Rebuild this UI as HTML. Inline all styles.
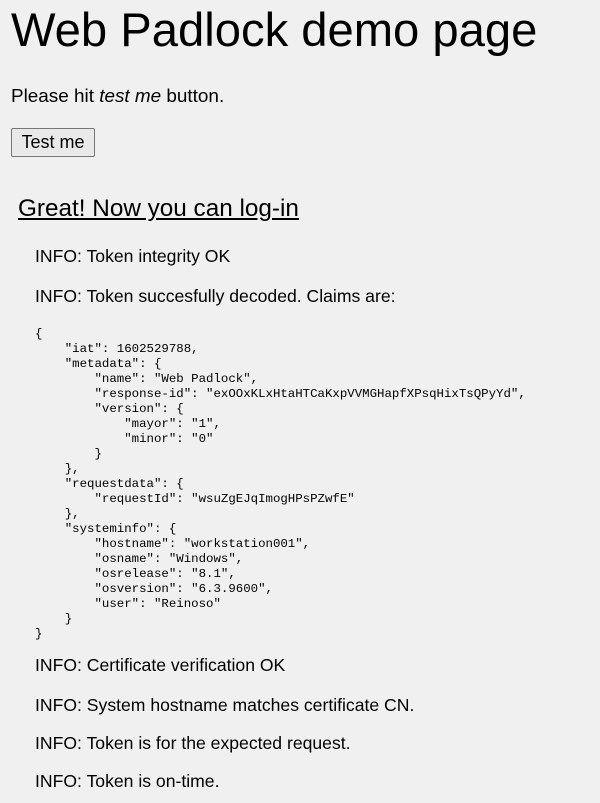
<!DOCTYPE html>
<html><head><meta charset="utf-8"><style>
body{margin:0;background:#f0f0f0;font-family:"Liberation Sans",Arial,sans-serif;color:#000;width:600px;height:803px;overflow:hidden;position:relative}
.a{position:absolute;white-space:pre;line-height:1}
h1{position:absolute;left:11px;top:7px;margin:0;font-weight:normal;font-size:47.2px;line-height:1}
.p{font-size:18.9px;left:11px}
.btn{position:absolute;left:11px;top:128px;width:82px;height:27px;border:1px solid #777;border-radius:2px;background:#e9e9e9;font-size:18px;text-align:center;line-height:27px;box-sizing:content-box}
.g{left:18px;top:197px;font-size:24.3px;text-decoration:underline}
.i{left:35px;font-size:17.6px}
pre{position:absolute;left:35px;top:327px;margin:0;font-family:"Liberation Mono",monospace;font-size:12.4px;line-height:15px}
</style></head><body>
<h1>Web Padlock demo page</h1>
<div class="a p" style="top:88px">Please hit <i>test me</i> button.</div>
<div class="btn">Test me</div>
<div class="a g">Great! Now you can log-in</div>
<div class="a i" style="top:248px">INFO: Token integrity OK</div>
<div class="a i" style="top:288px">INFO: Token succesfully decoded. Claims are:</div>
<pre>{
    "iat": 1602529788,
    "metadata": {
        "name": "Web Padlock",
        "response-id": "exOOxKLxHtaHTCaKxpVVMGHapfXPsqHixTsQPyYd",
        "version": {
            "mayor": "1",
            "minor": "0"
        }
    },
    "requestdata": {
        "requestId": "wsuZgEJqImogHPsPZwfE"
    },
    "systeminfo": {
        "hostname": "workstation001",
        "osname": "Windows",
        "osrelease": "8.1",
        "osversion": "6.3.9600",
        "user": "Reinoso"
    }
}</pre>
<div class="a i" style="top:657px">INFO: Certificate verification OK</div>
<div class="a i" style="top:697px">INFO: System hostname matches certificate CN.</div>
<div class="a i" style="top:735px">INFO: Token is for the expected request.</div>
<div class="a i" style="top:773px">INFO: Token is on-time.</div>
</body></html>
